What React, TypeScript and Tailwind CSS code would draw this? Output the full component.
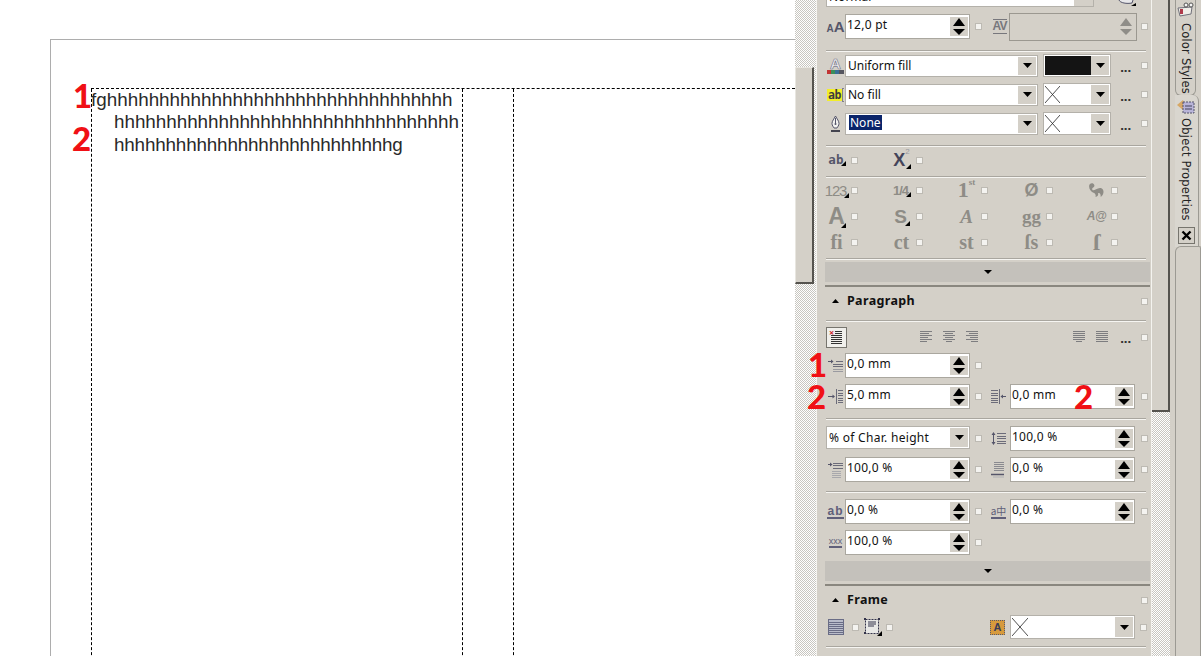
import React from "react";

const UI = "font-['Noto_Sans',sans-serif] text-[12px] text-[#111]";
const CHECKER = "bg-[repeating-conic-gradient(#c8c6c0_0_25%,#ffffff_0_50%)] bg-[length:2px_2px]";

const Check = ({ className = "" }: { className?: string }) => (
  <span className={"block w-[7px] h-[7px] shrink-0 bg-[#f4f3f0] border border-[#bdbab3] " + className} />
);

const Sep = ({ className = "" }: { className?: string }) => (
  <div className={"ml-[9px] w-[320px] h-[2px] border-t border-[#a9a69f] border-b border-b-[#f6f5f2] " + className} />
);

const Tri = ({ dir = "down", w = 9, h = 5, color = "#000" }: { dir?: "up" | "down"; w?: number; h?: number; color?: string }) => (
  <svg width={w} height={h} viewBox={`0 0 ${w} ${h}`} className="block">
    <polygon points={dir === "up" ? `0,${h} ${w},${h} ${w / 2},0` : `0,0 ${w},0 ${w / 2},${h}`} fill={color} />
  </svg>
);

const Spin = ({ disabled = false }: { disabled?: boolean }) => (
  <span className="w-[18px] self-stretch my-[2px] ml-auto mr-[1px] bg-[#d4d0c8] flex flex-col items-center justify-center gap-[3px]">
    <Tri dir="up" w={12} h={8} color={disabled ? "#8f8d88" : "#000"} />
    <Tri dir="down" w={12} h={6} color={disabled ? "#8f8d88" : "#000"} />
  </span>
);

const SpinField = ({ value, w = 125 }: { value: string; w?: number }) => (
  <div className="h-[25px] shrink-0 flex bg-white border border-[#aaa79f]" style={{ width: w }}>
    <span className="pl-[1px] pt-[2px] leading-[16px] tracking-[0.25px]">{value}</span>
    <Spin />
  </div>
);

const Drop = ({ label, selected, w = 193, h = 22 }: { label: string; selected?: boolean; w?: number; h?: number }) => (
  <div className="shrink-0 flex items-center bg-white border border-[#b4b1aa]" style={{ width: w, height: h }}>
    {selected ? (
      <span className="ml-[3px] mb-[2px] px-[1px] bg-[#0a246a] text-white leading-[15px]">{label}</span>
    ) : (
      <span className="ml-[2px] whitespace-nowrap">{label}</span>
    )}
    <span className="ml-auto mr-[1px] w-[18px] h-[18px] bg-[#d4d0c8] flex items-center justify-center">
      <Tri />
    </span>
  </div>
);

const XBox = ({ w = 15, h = 17 }: { w?: number; h?: number }) => (
  <svg width={w} height={h} viewBox={`0 0 ${w} ${h}`} className="block shrink-0 ml-[1px]">
    <path d={`M0 0L${w} ${h}M${w} 0L0 ${h}`} stroke="#222" strokeWidth="0.8" />
  </svg>
);

const ColorDrop = ({ black }: { black?: boolean }) => (
  <div className="ml-[5px] w-[68px] h-[23px] shrink-0 flex items-center bg-white border border-[#b4b1aa]">
    {black ? <span className="ml-[1px] w-[46px] h-[19px] bg-[#141414]" /> : <XBox />}
    <span className="ml-auto mr-[1px] w-[18px] h-[19px] bg-[#d4d0c8] flex items-center justify-center">
      <Tri />
    </span>
  </div>
);

const Dots = ({ className = "" }: { className?: string }) => (
  <span className={"block w-[10px] font-['DejaVu_Sans',sans-serif] text-[11px] font-bold text-[#333] leading-none tracking-[-0.6px] self-end pb-[3px] " + className}>...</span>
);

const Lines = ({ rows, w = 14, h = 13, color = "#7d7d80", x0 = 0 }: { rows: [number, number][]; w?: number; h?: number; color?: string; x0?: number }) => (
  <svg width={w} height={h} viewBox={`0 0 ${w} ${h}`} className="block shrink-0">
    {rows.map(([a, b], i) => (
      <rect key={i} x={a + x0} y={i * 2} width={b - a} height="1" fill={color} />
    ))}
  </svg>
);

const Corner = () => (
  <span className="absolute right-[-1px] bottom-[0px] w-0 h-0 border-l-[5px] border-l-transparent border-b-[5px] border-b-black" />
);

const IconSlot = ({ w = 19, children }: { w?: number; children: React.ReactNode }) => (
  <span className="shrink-0 flex items-center justify-center self-stretch" style={{ width: w }}>
    {children}
  </span>
);

const Cell = ({ icon, value, second }: { icon: React.ReactNode; value: string; second?: boolean }) => (
  <div className={"flex items-center h-[25px] " + (second ? "ml-[8px]" : "")}>
    <IconSlot w={second ? 20 : 19}>{icon}</IconSlot>
    <SpinField value={value} />
    <Check className={second ? "ml-[6px]" : "ml-[5px]"} />
  </div>
);

const Bar = () => (
  <div className="ml-[8px] w-[325px]">
    <div className="h-[20px] bg-[#c4c1bb] flex items-center justify-center">
      <Tri w={8} h={4} />
    </div>
    <div className="mt-[3px] h-[2px] bg-[#8a877f]" />
  </div>
);

const Heading = ({ label, className }: { label: string; className: string }) => (
  <div className={"ml-[9px] w-[322px] flex items-center " + className}>
    <span className="ml-[6px] mb-[1px]"><Tri dir="up" w={7} h={4} /></span>
    <span className="ml-[8px] font-bold text-[12.5px] tracking-[0.35px]">{label}</span>
    <Check className="ml-auto" />
  </div>
);

/* feature cell */
const Feat = ({ children, corner, cls = "" }: { children: React.ReactNode; corner?: boolean; cls?: string }) => (
  <div className="flex items-center h-[26px]">
    <span className="w-[25px] shrink-0 flex justify-center pr-[4px]">
      <span className={"relative block leading-none whitespace-nowrap " + cls}>
        {children}
        {corner && <Corner />}
      </span>
    </span>
    <Check />
  </div>
);

const G = "text-[#8e8c86] font-bold";
const SERIF = "font-['Liberation_Serif',serif]";
const SANS = "font-['Liberation_Sans',sans-serif]";
const INK = "#6c6c7a";

const IndentFirst = () => (
  <svg width="15" height="14" viewBox="0 0 15 14" className="block">
    <path d="M0 2.5H4" stroke="#55556a" />
    <path d="M5.5 2.5L3 0.5V4.5Z" fill="#55556a" />
    <rect x="8" y="2" width="7" height="1" fill={INK} />
    <rect x="5" y="5" width="10" height="1" fill={INK} />
    <rect x="5" y="7" width="10" height="1" fill={INK} />
    <rect x="5" y="10" width="10" height="1" fill="#9a9aa0" />
    <rect x="5" y="12" width="10" height="1" fill="#9a9aa0" />
  </svg>
);
const IndentLeft = () => (
  <svg width="15" height="15" viewBox="0 0 15 15" className="block">
    <path d="M0 7.5H5" stroke="#55556a" />
    <path d="M7 7.5L4.5 5.5V9.5Z" fill="#55556a" />
    <rect x="8" y="0" width="1" height="15" fill={INK} />
    {[1, 4, 6, 9, 11, 13].map((y) => (
      <rect key={y} x="10" y={y} width="5" height="1" fill={INK} />
    ))}
  </svg>
);
const IndentRight = () => (
  <svg width="15" height="15" viewBox="0 0 15 15" className="block mr-[3px]">
    <path d="M15 7.5H11" stroke="#55556a" />
    <path d="M9.5 7.5L12 5.5V9.5Z" fill="#55556a" />
    <rect x="8" y="0" width="1" height="15" fill={INK} />
    {[1, 4, 6, 9, 11, 13].map((y) => (
      <rect key={y} x="0" y={y} width="7" height="1" fill={INK} />
    ))}
  </svg>
);
const LineSpacing = () => (
  <svg width="15" height="13" viewBox="0 0 15 13" className="block mr-[3px]">
    <path d="M2.5 2V11" stroke="#55556a" />
    <path d="M2.5 0L0.5 3H4.5ZM2.5 13L0.5 10H4.5Z" fill="#55556a" />
    {[1, 4, 6, 9, 11].map((y) => (
      <rect key={y} x="6" y={y} width="9" height="1" fill={INK} />
    ))}
  </svg>
);
const SpaceBefore = () => (
  <svg width="15" height="16" viewBox="0 0 15 16" className="block">
    <path d="M0 2.5H2" stroke="#55556a" />
    <path d="M4.5 2.5L2 0.5V4.5Z" fill="#55556a" />
    {[1, 3, 6].map((y) => (
      <rect key={y} x="5" y={y} width="10" height="1" fill={INK} />
    ))}
    {[9, 11, 13, 15].map((y) => (
      <rect key={y} x="4" y={y} width="9" height="1" fill="#a8a8ac" />
    ))}
  </svg>
);
const SpaceAfter = () => (
  <svg width="14" height="16" viewBox="0 0 14 16" className="block mr-[4px]">
    {[0, 2, 4, 6, 8].map((y) => (
      <rect key={y} x="3" y={y} width="10" height="1" fill="#8a8a90" />
    ))}
    <path d="M0 12.5H13" stroke="#55556a" strokeWidth="1.5" />
    <path d="M2 15H13" stroke="#b0b0b4" />
  </svg>
);
const PenNib = () => (
  <svg width="13" height="18" viewBox="0 0 13 18" className="block">
    <path d="M6.5 1C8 4 10 6 10 8.5C10 10.5 8.5 12 8 13H5C4.5 12 3 10.5 3 8.5C3 6 5 4 6.5 1Z" fill="#f2f2f0" stroke="#55556a" />
    <path d="M6.5 3V8.5" stroke="#55556a" />
    <circle cx="6.5" cy="9" r="1" fill="#55556a" />
    <rect x="2" y="15" width="9" height="2" fill="#44444f" />
  </svg>
);
const FillA = () => (
  <svg width="17" height="19" viewBox="0 0 17 19" className="block">
    <text x="8.5" y="13" textAnchor="middle" fontSize="15" fontFamily="Liberation Sans" fontWeight="700" fill="#f3f3f5" stroke="#7a7a90" strokeWidth="0.7">A</text>
    <rect x="0" y="14" width="4" height="4" fill="#c23434" />
    <rect x="4" y="14" width="4" height="4" fill="#3c8f5a" />
    <rect x="8" y="14" width="4" height="4" fill="#3a6f96" />
    <rect x="12" y="14" width="5" height="4" fill="#55555f" />
  </svg>
);
const FrameCols = () => (
  <svg width="16" height="16" viewBox="0 0 16 16" className="block">
    <rect x="0.5" y="0.5" width="15" height="15" fill="#b9bcca" stroke="#6a6d86" />
    {[3, 5, 7, 9, 11, 13].map((y) => (
      <rect key={y} x="1" y={y} width="14" height="1" fill="#6a6d86" />
    ))}
  </svg>
);
const FrameIcon = () => (
  <span className="relative block">
    <svg width="18" height="18" viewBox="0 0 18 18" className="block">
      <rect x="2.5" y="1.5" width="13" height="14" fill="#e8e8e6" stroke="#33334a" strokeDasharray="2 1" />
      <path d="M5 4H13M5 6H13M5 8H11" stroke="#33334a" />
      <path d="M1 0h2v2H1zM15 0h2v2h-2zM1 14h2v2H1z" fill="#33334a" />
    </svg>
    <Corner />
  </span>
);
const AOrange = () => (
  <span className="relative w-[15px] h-[15px] bg-[#d79a3c] border border-dotted border-[#5a5a6a] flex items-center justify-center font-bold text-[11px] leading-none text-[#3c3c55] font-['Liberation_Sans',sans-serif]">
    A
  </span>
);

const Annot = ({ t, cls }: { t: string; cls: string }) => (
  <span className={"absolute font-['Lato',sans-serif] font-black text-[33px] leading-none text-[#f01015] " + cls}>{t}</span>
);

const TabLabel = ({ t }: { t: string }) => (
  <span className="[writing-mode:vertical-rl] font-['DejaVu_Sans',sans-serif] text-[11.5px] leading-none text-[#222] tracking-[0.2px] whitespace-nowrap">
    {t}
  </span>
);

export default function App() {
  return (
    <div className={"relative w-[1201px] h-[656px] overflow-hidden flex bg-white " + UI}>
      {/* canvas */}
      <div className="w-[795px] h-full shrink-0 overflow-hidden">
        <div className="ml-[50px] mt-[39px] h-full border-l border-t border-[#adadad] pl-[40px] pt-[48px] flex">
          <div className="flex-1 h-full border-t border-dashed border-black flex">
            <div className="w-[372px] shrink-0 h-full border-l border-r border-dashed border-black font-['Liberation_Sans',sans-serif] text-[18.85px] leading-[22.4px] text-[#2a2a2a] whitespace-nowrap">
              <div className="-ml-[1px]">fghhhhhhhhhhhhhhhhhhhhhhhhhhhhhhhhh</div>
              <div className="ml-[22px] tracking-[-0.03px]">hhhhhhhhhhhhhhhhhhhhhhhhhhhhhhhhh</div>
              <div className="ml-[22px] tracking-[-0.17px]">hhhhhhhhhhhhhhhhhhhhhhhhhhhg</div>
            </div>
            <div className="ml-[50px] flex-1 h-full border-l border-dashed border-black" />
          </div>
        </div>
      </div>

      {/* panel scrollbar */}
      <div className={"w-[21px] h-full shrink-0 " + CHECKER}>
        <div className="mt-[67px] h-[217px] w-[19px] bg-[#d4d0c8] border-l border-t border-l-[#e8e6e0] border-t-[#e8e6e0] border-r-2 border-b-2 border-r-[#55534e] border-b-[#55534e]" />
      </div>

      {/* panel */}
      <div className="w-[336px] h-full shrink-0 bg-[#d4d0c8] border-l border-r border-l-[#f4f3ef] border-r-[#f4f3ef] flex flex-col">
        {/* clipped top row */}
        <div className="h-[7px] overflow-hidden flex items-end ml-[9px] shrink-0">
          <div className="w-[268px] h-[22px] shrink-0 flex items-end bg-white border border-[#b4b1aa] pl-[2px]">
            <span className="leading-[20px] -mb-[1px]">Normal</span>
            <span className="ml-auto w-[19px] h-[21px] bg-[#d4d0c8]" />
          </div>
          <svg width="18" height="7" viewBox="0 0 18 7" className="ml-[24px] block shrink-0">
            <path d="M1 0C2 3 9 4 14 3L15 0" stroke="#55556a" fill="#e8e8ea" />
            <path d="M13 6H18V3Z" fill="#000" />
          </svg>
        </div>

        <div className="mt-[7px] flex items-center h-[25px] ml-[9px]">
          <IconSlot>
            <span className={"font-bold text-[#55566a] leading-none " + SANS}>
              <span className="text-[10px]">A</span>
              <span className="text-[15px]">A</span>
            </span>
          </IconSlot>
          <SpinField value="12,0 pt" />
          <Check className="ml-[5px]" />
          <span className="ml-[8px] w-[20px] shrink-0 flex justify-center">
            <span className={"font-bold text-[12px] leading-[13px] text-[#77777c] border-t border-b border-[#77777c] tracking-[-1px] pr-[1px] " + SANS}>AV</span>
          </span>
          <div className="-ml-[1px] w-[128px] h-[28px] -my-[2px] border border-[#9b9890] flex shrink-0">
            <Spin disabled />
          </div>
          <Check className="ml-[4px]" />
        </div>

        <Sep className="mt-[11px]" />

        <div className="mt-[2px] ml-[9px] flex items-center h-[23px]">
          <IconSlot><FillA /></IconSlot>
          <Drop label="Uniform fill" />
          <ColorDrop black />
          <Dots className="ml-[9px]" />
          <Check className="ml-[11px]" />
        </div>
        <div className="mt-[6px] ml-[9px] flex items-center h-[23px]">
          <IconSlot>
            <span className="flex items-center">
              <span className={"bg-[#f2ee2a] text-[#3c3c3c] font-bold text-[11.5px] leading-[12px] px-[1px] font-['DejaVu_Sans_Mono',monospace] tracking-[-0.5px]"}>ab</span>
              <span className="w-[2px] h-[14px] border border-r-0 border-[#80808a]" />
            </span>
          </IconSlot>
          <Drop label="No fill" />
          <ColorDrop />
          <Dots className="ml-[9px]" />
          <Check className="ml-[11px]" />
        </div>
        <div className="mt-[6px] ml-[9px] flex items-center h-[23px]">
          <IconSlot><PenNib /></IconSlot>
          <Drop label="None" selected />
          <ColorDrop />
          <Dots className="ml-[9px]" />
          <Check className="ml-[11px]" />
        </div>

        <Sep className="mt-[10px]" />

        <div className="ml-[9px] grid grid-cols-[repeat(5,65px)]">
          <Feat corner cls={"font-['DejaVu_Sans_Mono',monospace] font-bold text-[#55566a] text-[12.5px] tracking-[0.2px] pr-[1px]"}>ab</Feat>
          <Feat corner cls={"font-bold text-[#44445a] text-[18px] " + SANS}>
            X<sup className="text-[8px] font-normal text-[#9a9aa0] align-[8px] leading-none">2</sup>
          </Feat>
        </div>

        <Sep className="mt-[3px]" />

        <div className="-mt-[1px] ml-[9px] grid grid-cols-[repeat(5,65px)]">
          <Feat corner cls={G + " text-[15px] tracking-[-1.2px] " + SANS + " font-normal pr-[2px]"}>123</Feat>
          <Feat corner cls={G + " text-[13px] tracking-[-1px] pr-[2px] " + SANS}>1/4</Feat>
          <Feat cls={G + " text-[22px] " + SERIF}>1<sup className="text-[9px] leading-none align-[8px]">st</sup></Feat>
          <Feat cls={G + " text-[18px] " + SANS}>Ø</Feat>
          <Feat>
            <svg width="17" height="17" viewBox="0 0 16 16" className="block">
              <path d="M1 4C1 1 5 0 6 3C6.5 5 3.5 5 4 7C5 10 9 4 13 6C15.5 7.5 15 12 12 14C12 11 11 10 9.5 10.5C10 12 9 14 7 14C8 12 6 10 5 10C3 9 1 7 1 4Z" fill="#8e8c86" />
            </svg>
          </Feat>
          <Feat corner cls={G + " text-[23px] " + SANS}>A</Feat>
          <Feat corner cls={G + " text-[19px] pr-[2px] " + SANS}>S</Feat>
          <Feat cls={G + " text-[19px] italic " + SERIF}>A</Feat>
          <Feat cls={G + " text-[19px] " + SERIF}>gg</Feat>
          <Feat cls={G + " text-[12px] italic tracking-[-0.5px] " + SANS}>A@</Feat>
          <Feat cls={G + " text-[20px] " + SERIF}>fi</Feat>
          <Feat cls={G + " text-[20px] " + SERIF}>ct</Feat>
          <Feat cls={G + " text-[20px] " + SERIF}>st</Feat>
          <Feat cls={G + " text-[20px] " + SERIF}>ſs</Feat>
          <Feat cls={G + " text-[24px] " + SERIF}>ſ</Feat>
        </div>

        <Sep className="mt-[3px]" />
        <div className="mt-[2px]"><Bar /></div>
        <Heading label="Paragraph" className="h-[33px] pb-[4px]" />
        <Sep />

        <div className="mt-[5px] ml-[9px] flex items-center h-[21px]">
          <span className="relative w-[21px] h-[21px] border border-[#77756e] bg-[#f0efeb] flex items-center justify-center shrink-0">
            <Lines w={13} h={13} color="#333" rows={[[5, 12], [5, 12], [1, 12], [1, 12], [1, 12], [1, 12], [1, 12]]} />
            <span className="absolute left-[2px] top-[0px] text-[#c8232c] font-bold text-[9px] leading-[10px]">×</span>
          </span>
          <span className="ml-[73px]"><Lines rows={[[0, 12], [0, 9], [0, 12], [0, 8], [0, 12], [0, 7]]} /></span>
          <span className="ml-[9px]"><Lines rows={[[0, 12], [2, 10], [0, 12], [2, 10], [0, 12], [3, 9]]} /></span>
          <span className="ml-[9px]"><Lines rows={[[0, 12], [3, 12], [0, 12], [4, 12], [0, 12], [5, 12]]} /></span>
          <span className="ml-[93px]"><Lines rows={[[0, 12], [0, 12], [0, 12], [0, 12], [0, 12], [3, 9]]} /></span>
          <span className="ml-[9px]"><Lines rows={[[0, 12], [0, 12], [0, 12], [0, 12], [0, 12], [0, 12]]} /></span>
          <Dots className="ml-[10px]" />
          <Check className="ml-[11px]" />
        </div>

        <div className="mt-[5px] ml-[9px] flex"><Cell icon={<IndentFirst />} value="0,0 mm" /></div>
        <div className="mt-[6px] ml-[9px] flex">
          <Cell icon={<IndentLeft />} value="5,0 mm" />
          <Cell second icon={<IndentRight />} value="0,0 mm" />
        </div>

        <Sep className="mt-[9px]" />

        <div className="mt-[6px] ml-[9px] flex">
          <div className="flex items-center h-[25px]">
            <div className="w-[144px] h-[23px] mb-[2px] shrink-0 flex items-center bg-white border border-[#b4b1aa]">
              <span className="ml-[2px] tracking-[0.3px] whitespace-nowrap">% of Char. height</span>
              <span className="ml-auto mr-[1px] w-[18px] h-[19px] bg-[#d4d0c8] flex items-center justify-center"><Tri /></span>
            </div>
            <Check className="ml-[5px]" />
          </div>
          <Cell second icon={<LineSpacing />} value="100,0 %" />
        </div>
        <div className="mt-[6px] ml-[9px] flex">
          <Cell icon={<SpaceBefore />} value="100,0 %" />
          <Cell second icon={<SpaceAfter />} value="0,0 %" />
        </div>

        <Sep className="mt-[9px]" />

        <div className="mt-[6px] ml-[9px] flex">
          <Cell icon={<span className={"font-bold text-[12px] text-[#60607a] border-b-2 border-[#60607a] leading-[12px] tracking-[1px] " + SANS}>ab</span>} value="0,0 %" />
          <Cell second icon={<span className={"flex whitespace-nowrap text-[10px] text-[#60607a] border-b-2 border-[#60607a] leading-[12px] mr-[3px] font-['Noto_Sans_CJK_SC',sans-serif]"}>a中</span>} value="0,0 %" />
        </div>
        <div className="mt-[6px] ml-[9px] flex">
          <Cell icon={<span className={"text-[9px] text-[#60607a] border-b-2 border-[#60607a] leading-[9px] " + SANS}>xxx</span>} value="100,0 %" />
        </div>

        <div className="mt-[6px]"><Bar /></div>
        <Heading label="Frame" className="h-[29px] pb-[1px]" />

        <div className="ml-[9px] flex items-center h-[24px]">
          <span className="ml-[2px]"><FrameCols /></span>
          <Check className="ml-[8px]" />
          <span className="ml-[4px]"><FrameIcon /></span>
          <Check className="ml-[5px]" />
          <span className="ml-[97px]"><AOrange /></span>
          <div className="ml-[5px] w-[125px] h-[24px] shrink-0 flex items-center bg-white border border-[#b4b1aa]">
            <XBox w={16} h={18} />
            <span className="ml-auto mr-[1px] w-[18px] h-[20px] bg-[#d4d0c8] flex items-center justify-center"><Tri /></span>
          </div>
          <Check className="ml-[5px]" />
        </div>

        <Sep className="mt-[7px]" />
      </div>

      {/* second scrollbar */}
      <div className={"w-[18px] h-full shrink-0 " + CHECKER}>
        <div className="h-[412px] bg-[#d4d0c8] border-r-2 border-b-2 border-[#55534e]" />
      </div>

      {/* dock tabs */}
      <div className="w-[31px] h-full shrink-0 bg-[#d4d0c8] pl-[5px] flex flex-col">
        <div className="w-[21px] h-[96px] shrink-0 border-l border-r border-b border-[#9c9a93] rounded-b-[6px] flex flex-col items-center overflow-hidden">
          <svg width="18" height="16" viewBox="0 0 18 16" className="block shrink-0 mt-[2px]">
            <path d="M1 6L3 14L14 12L15 5Z" fill="#f0eee8" stroke="#70707a" />
            <rect x="3" y="7" width="3" height="5" fill="#b03a4a" />
            <circle cx="9" cy="3" r="2" fill="#f4f4f4" stroke="#555" />
            <circle cx="14" cy="3" r="2" fill="#f4f4f4" stroke="#555" />
          </svg>
          <span className="mt-[5px]"><TabLabel t="Color Styles" /></span>
        </div>
        <div className="-mt-[1px] w-[24px] h-[152px] shrink-0 bg-[#d9d6cf] border-r border-[#9c9a93] rounded-tr-[6px] flex flex-col items-center">
          <svg width="18" height="17" viewBox="0 0 18 17" className="block shrink-0 mt-[2px] mr-[2px]">
            <path d="M0 8L6 3L8 8L6 13Z" fill="#d7a866" />
            <rect x="6" y="5" width="11" height="11" fill="#b8b4d8" stroke="#55556a" strokeDasharray="2 1" />
            <path d="M8 9H15M8 12H15" stroke="#44445a" />
          </svg>
          <span className="mt-[4px] mr-[2px]"><TabLabel t="Object Properties" /></span>
          <span className="mt-[1px] w-[17px] h-[17px] bg-[#d4d0c8] border border-[#77756e] flex items-center justify-center shrink-0">
            <svg width="11" height="11" viewBox="0 0 11 11" className="block"><path d="M1.5 1.5L9.5 9.5M9.5 1.5L1.5 9.5" stroke="#000" strokeWidth="2.4" /></svg>
          </span>
        </div>
        <div className="-mt-[1px] flex-1 w-[26px] border-l border-t border-r border-[#9c9a93] rounded-tl-[6px] rounded-tr-[2px]" />
      </div>

      {/* red annotations laid over the picture */}
      <Annot t="1" cls="left-[73px] top-[79px]" />
      <Annot t="2" cls="left-[72px] top-[122px]" />
      <Annot t="1" cls="left-[808px] top-[348px]" />
      <Annot t="2" cls="left-[807px] top-[380px]" />
      <Annot t="2" cls="left-[1074px] top-[380px]" />
    </div>
  );
}
